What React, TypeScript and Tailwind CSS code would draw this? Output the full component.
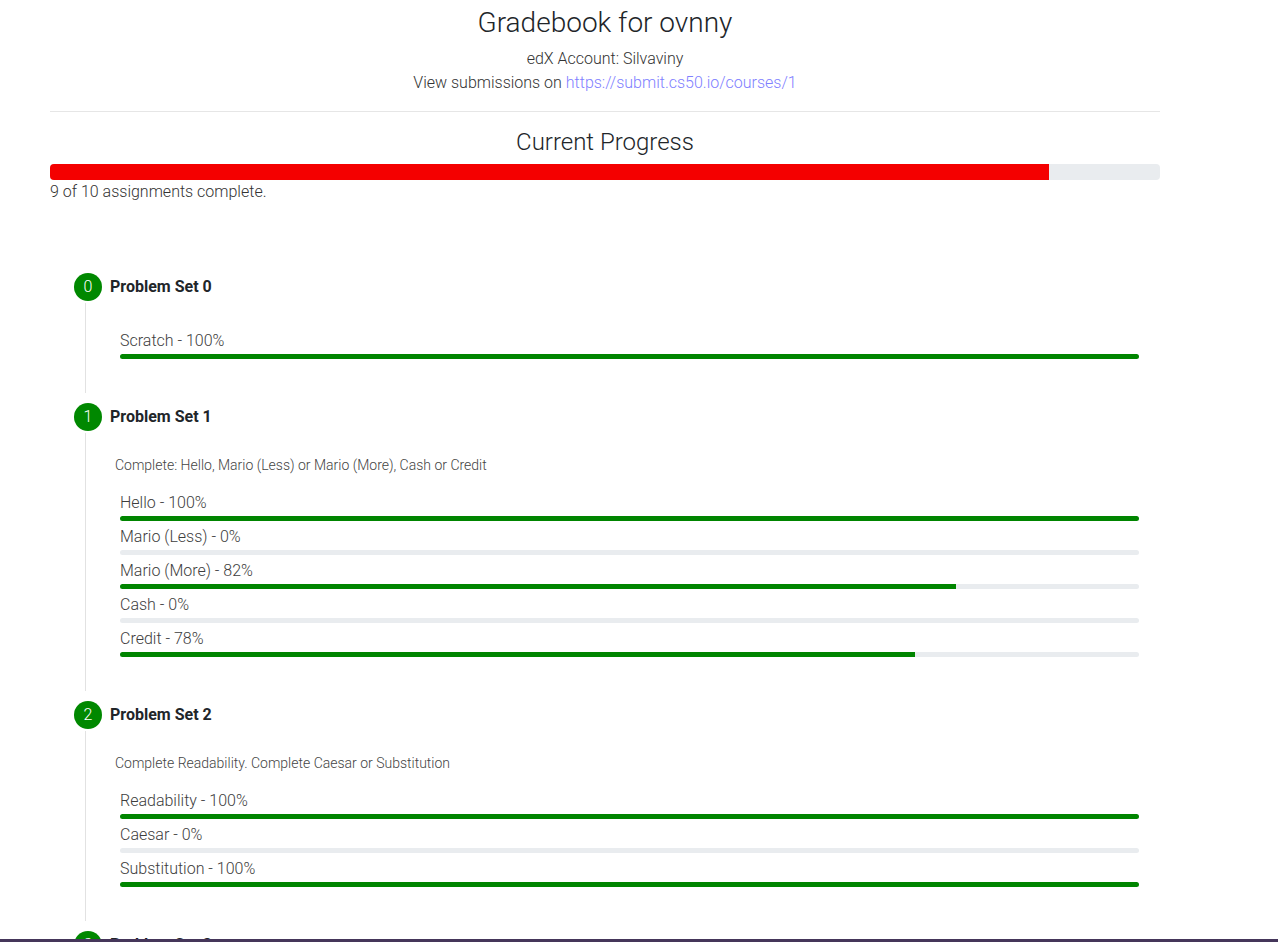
import React from "react";

type Task = { name: string; score: number };
type PSet = { num: number; title: string; note?: string; tasks: Task[] };

const psets: PSet[] = [
  { num: 0, title: "Problem Set 0", tasks: [{ name: "Scratch", score: 100 }] },
  {
    num: 1,
    title: "Problem Set 1",
    note: "Complete: Hello, Mario (Less) or Mario (More), Cash or Credit",
    tasks: [
      { name: "Hello", score: 100 },
      { name: "Mario (Less)", score: 0 },
      { name: "Mario (More)", score: 82 },
      { name: "Cash", score: 0 },
      { name: "Credit", score: 78 },
    ],
  },
  {
    num: 2,
    title: "Problem Set 2",
    note: "Complete Readability. Complete Caesar or Substitution",
    tasks: [
      { name: "Readability", score: 100 },
      { name: "Caesar", score: 0 },
      { name: "Substitution", score: 100 },
    ],
  },
  {
    num: 3,
    title: "Problem Set 3",
    note: "Complete Plurality. Complete Runoff or Tideman",
    tasks: [
      { name: "Plurality", score: 100 },
      { name: "Runoff", score: 100 },
      { name: "Tideman", score: 0 },
    ],
  },
];

function TaskBar({ task }: { task: Task }) {
  return (
    <div className="mb-[4px]">
      <div className="text-[16px] leading-6 text-[#3d3d3d]">
        {task.name} - {task.score}%
      </div>
      <div className="mt-[1px] h-[5px] w-full overflow-hidden rounded-[3px] bg-[#e9ecef]">
        <div className="h-full bg-[#008500]" style={{ width: `${task.score}%` }} />
      </div>
    </div>
  );
}

function Section({ pset }: { pset: PSet }) {
  return (
    <div className="mb-[10px]">
      <div className="flex items-center gap-2 pl-[24px]">
        <div className="flex h-[28px] w-[28px] items-center justify-center rounded-full bg-[#008800] text-[16px] font-light text-white">
          {pset.num}
        </div>
        <div className="text-[16px] font-bold text-[#212529]">{pset.title}</div>
      </div>
      <div className="ml-[35px] mt-[2px] border-l border-[#e2e2e2] pb-[30px] pl-[29px] pr-[21px]">
        {pset.note ? (
          <p className="mb-[15px] pt-[22px] text-[14px] leading-[21px] text-[#444]">{pset.note}</p>
        ) : (
          <div className="pt-[26px]" />
        )}
        <div className="pl-[5px]">
          {pset.tasks.map((t) => (
            <TaskBar key={t.name} task={t} />
          ))}
        </div>
      </div>
    </div>
  );
}

export default function App() {
  return (
    <div className="min-h-screen bg-white font-['Roboto','Liberation_Sans',sans-serif] font-light text-[#212529]">
      <div className="ml-[50px] w-[1110px]">
        <h2 className="pt-[6px] text-center text-[28px] leading-[1.2] font-light">Gradebook for ovnny</h2>
        <div className="mt-[7px] text-center text-[16px] leading-6 text-[#333]">
          <div>edX Account: Silvaviny</div>
          <div>
            View submissions on{" "}
            <a href="#" className="text-[#8080ff]">
              https://submit.cs50.io/courses/1
            </a>
          </div>
        </div>
        <hr className="mt-[16px] border-t border-[#e6e6e6]" />
        <h3 className="mt-[16px] text-center text-[24px] leading-[1.2] font-light">Current Progress</h3>
        <div className="mt-[8px] h-[16px] w-full overflow-hidden rounded-[4px] bg-[#e9ecef]">
          <div className="h-full bg-[#f40000]" style={{ width: "90%" }} />
        </div>
        <div className="mt-[1px] text-[16px] leading-[22px] text-[#333]">9 of 10 assignments complete.</div>
        <div className="mt-[70px]">
          {psets.map((p) => (
            <Section key={p.num} pset={p} />
          ))}
        </div>
      </div>
      <div className="fixed bottom-0 left-0 h-[3px] w-full bg-[#45365a]" />
    </div>
  );
}
